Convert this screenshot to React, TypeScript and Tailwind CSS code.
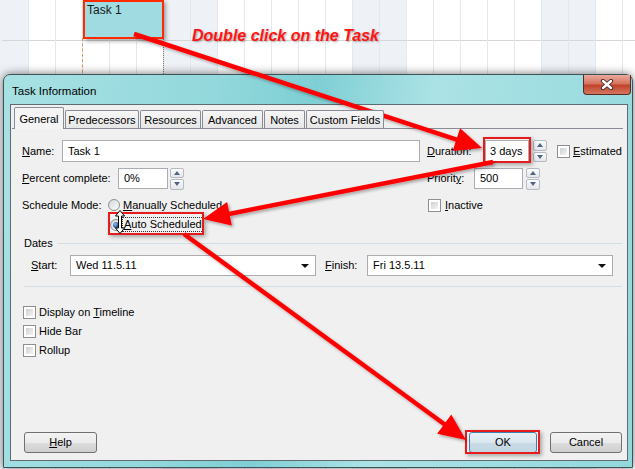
import React from "react";

const cols = Array.from({ length: 24 }, (_, i) => i);

type ArrowProps = { x1: number; y1: number; x2: number; y2: number };

function Arrow({ x1, y1, x2, y2 }: ArrowProps) {
  const dx = x2 - x1;
  const dy = y2 - y1;
  const len = Math.hypot(dx, dy);
  const ux = dx / len;
  const uy = dy / len;
  const L = 27;
  const W = 12;
  const bx = x2 - ux * L;
  const by = y2 - uy * L;
  const nx = -uy;
  const ny = ux;
  const pts = `${x2},${y2} ${bx + nx * W},${by + ny * W} ${bx - nx * W},${by - ny * W}`;
  return (
    <g filter="url(#arrowShadow)">
      <line x1={x1} y1={y1} x2={bx + ux * 2} y2={by + uy * 2} stroke="#ff0000" strokeWidth={4.5} />
      <polygon points={pts} fill="#ff0000" />
    </g>
  );
}

function Spinner() {
  return (
    <div className="flex h-full w-[14px] flex-col gap-[1px]">
      {[0, 1].map((i) => (
        <div
          key={i}
          className="flex flex-1 items-center justify-center rounded-[2px] border border-[#b6bac1] bg-[linear-gradient(#fbfbfb,#e4e6ea)]"
        >
          <svg width="6" height="4" viewBox="0 0 6 4">
            {i === 0 ? (
              <polygon points="0,4 6,4 3,0" fill="#4f6385" />
            ) : (
              <polygon points="0,0 6,0 3,4" fill="#4f6385" />
            )}
          </svg>
        </div>
      ))}
    </div>
  );
}

function Checkbox() {
  return (
    <div className="h-[13px] w-[13px] shrink-0 border border-[#8e8f8f] bg-white p-[2px]">
      <div className="h-full w-full bg-[linear-gradient(135deg,#cdd0d3,#f4f4f4)]" />
    </div>
  );
}

function Radio({ checked }: { checked?: boolean }) {
  return (
    <div className="flex h-[12px] w-[12px] shrink-0 items-center justify-center rounded-full border border-[#8e8f8f] bg-[linear-gradient(135deg,#d6d8db,#fbfbfb)]">
      {checked && (
        <div className="h-[6px] w-[6px] rounded-full bg-[radial-gradient(circle_at_35%_35%,#9cc3ee,#2a5f9e_55%,#0f2c55)]" />
      )}
    </div>
  );
}

function Combo({ value }: { value: string }) {
  return (
    <div className="flex h-[21px] w-[246px] items-center border border-[#abadb3] bg-white pl-[5px] pr-[6px]">
      <span className="flex-1">{value}</span>
      <svg width="8" height="4" viewBox="0 0 8 4">
        <polygon points="0,0 8,0 4,4" fill="#111" />
      </svg>
    </div>
  );
}

function Button({ children, focused }: { children: React.ReactNode; focused?: boolean }) {
  return (
    <div
      className={
        focused
          ? "flex h-[21px] w-[68px] items-center justify-center rounded-[3px] border border-[#3c7fb1] bg-[linear-gradient(#e6f0f6,#dae7ef_50%,#c8dbe6_50%,#c3d7e3)]"
          : "flex h-[21px] items-center justify-center rounded-[3px] border border-[#707070] bg-[linear-gradient(#f3f3f3,#ebebeb_50%,#dddddd_50%,#cfcfcf)]"
      }
    >
      {children}
    </div>
  );
}

const tabs = [
  { label: "Predecessors", w: "w-[74px]" },
  { label: "Resources", w: "w-[61px]" },
  { label: "Advanced", w: "w-[61px]" },
  { label: "Notes", w: "w-[41px]" },
  { label: "Custom Fields", w: "w-[78px]" },
];

export default function App() {
  return (
    <div className="relative h-[469px] w-[635px] overflow-hidden bg-white font-['Liberation_Sans',Arial,sans-serif] text-[11px] text-black">
      {/* gantt grid */}
      <div className="flex h-full">
        <div className="w-[2px] shrink-0 bg-[#eef1f6]" />
        {cols.map((i) => (
          <div
            key={i}
            className={`flex w-[27px] shrink-0 flex-col border-r border-[#e3e8ef] ${
              i % 7 === 6 || i % 7 === 0 ? "bg-[#eef1f6]" : "bg-white"
            }`}
          >
            <div className="h-[41px] border-b border-[#d6d6d6]" />
          </div>
        ))}
      </div>

      {/* task bar */}
      <div className="absolute left-[82px] top-[38px] h-[40px] border-l border-dashed border-[#e8984e]" />
      <div className="absolute left-[163px] top-[38px] h-[40px] border-l border-dotted border-[#777]" />
      <div className="absolute left-[83px] top-0 h-[39px] w-[81px] border-2 border-[#ff2a00] bg-[#9fdbe0] pl-[2px] pt-[1px] text-[12px] leading-[14px] text-[#1a1a1a] shadow-[2px_2px_4px_rgba(0,0,0,0.35)]">
        Task 1
      </div>

      <div className="absolute left-[192px] top-[24px] text-[16px] font-bold italic text-[#ff1414] [text-shadow:1px_1px_2px_rgba(0,0,0,0.35)]">
        Double click on the Task
      </div>

      {/* dialog window */}
      <div className="absolute left-[3px] top-[74px] flex h-[394px] w-[630px] flex-col rounded-t-[7px] border border-[#3e5257] bg-[linear-gradient(100deg,#a8e1e4_0%,#93d8dc_30%,#7ecfd4_45%,#abe2e5_62%,#92d8dc_100%)] pb-[6px] pl-[6px] pr-[4px] shadow-[0_0_10px_rgba(0,0,0,0.55)]">
        <div className="flex h-[29px] shrink-0 items-start">
          <span className="ml-[2px] mt-[8px] text-[11.5px]">Task Information</span>
          <div className="-mr-[3px] ml-auto flex h-[20px] w-[48px] items-center justify-center rounded-b-[4px] border border-t-0 border-[#5a2a22] bg-[linear-gradient(#e9aa9e,#d6735f_45%,#c2432c_55%,#d4765f)]">
            <svg width="14" height="11" viewBox="0 0 14 11">
              <path d="M3 2 L11 9 M11 2 L3 9" stroke="#3b2a2a" strokeWidth="4.2" strokeLinecap="round" />
              <path d="M3 2 L11 9 M11 2 L3 9" stroke="#ffffff" strokeWidth="2.4" strokeLinecap="round" />
            </svg>
          </div>
        </div>

        <div className="flex flex-1 flex-col border border-[#5e6c72] bg-[#f0f0f0]">
          {/* tabs */}
          <div className="relative z-10 ml-[3px] mt-[2px] flex h-[21px] items-end">
            <div className="-mb-px flex h-[22px] w-[50px] justify-center rounded-t-[2px] border border-b-0 border-[#898c95] bg-[#f4f4f4] pt-[3px]">
              General
            </div>
            {tabs.map((t) => (
              <div
                key={t.label}
                className={`ml-[1px] flex h-[18px] ${t.w} justify-center rounded-t-[2px] border border-b-0 border-[#898c95] bg-[linear-gradient(#f6f6f6,#e6e6e6)] pt-[1px]`}
              >
                {t.label}
              </div>
            ))}
          </div>

          {/* tab panel */}
          <div className="ml-[1px] mr-[4px] flex flex-1 flex-col border-t border-[#898c95] pl-[10px]">
            <div className="mt-[11px] flex h-[22px] items-center">
              <span className="w-[40px]">
                <u>N</u>ame:
              </span>
              <div className="flex h-[22px] w-[358px] items-center border border-[#abadb3] bg-white pl-[5px]">Task 1</div>
              <span className="ml-[7px] w-[58px]">
                <u>D</u>uration:
              </span>
              <div className="flex h-[22px] w-[44px] items-center border border-[#abadb3] bg-white pl-[4px]">3 days</div>
              <div className="ml-[4px] h-[22px]">
                <Spinner />
              </div>
              <div className="ml-[10px]">
                <Checkbox />
              </div>
              <span className="ml-[3px]">
                <u>E</u>stimated
              </span>
            </div>

            <div className="mt-[6px] flex h-[21px] items-center">
              <span className="w-[96px]">
                <u>P</u>ercent complete:
              </span>
              <div className="flex h-[21px] w-[50px] items-center border border-[#abadb3] bg-white pl-[5px]">0%</div>
              <div className="ml-[2px] h-[22px]">
                <Spinner />
              </div>
              <span className="ml-[243px] w-[47px]">
                Priorit<u>y</u>:
              </span>
              <div className="flex h-[21px] w-[49px] items-center border border-[#abadb3] bg-white pl-[5px]">500</div>
              <div className="ml-[3px] h-[22px]">
                <Spinner />
              </div>
            </div>

            <div className="mt-[9px] flex h-[14px] items-center">
              <span className="w-[86px]">Schedule Mode:</span>
              <div className="flex w-[320px] items-center">
                <Radio />
                <span className="ml-[3px]">
                  <u>M</u>anually Scheduled
                </span>
              </div>
              <Checkbox />
              <span className="ml-[4px]">
                <u>I</u>nactive
              </span>
            </div>

            <div className="ml-[88px] mt-[5px] flex h-[15px] items-center">
              <Radio checked />
              <span className="border border-dotted border-[#333] px-[1px] leading-[13px]">
                <u>A</u>uto Scheduled
              </span>
            </div>

            <div className="mt-[5px] flex h-[13px] items-center">
              <span className="ml-[2px]">Dates</span>
              <div className="ml-[5px] mr-[1px] h-px flex-1 bg-[#d3dde4]" />
            </div>

            <div className="mt-[5px] flex h-[21px] items-center">
              <span className="ml-[9px] w-[39px]">
                <u>S</u>tart:
              </span>
              <Combo value="Wed 11.5.11" />
              <span className="ml-[9px] w-[42px]">
                <u>F</u>inish:
              </span>
              <Combo value="Fri 13.5.11" />
            </div>

            <div className="ml-[2px] mr-[1px] mt-[10px] h-px bg-[#d3dde4]" />

            <div className="ml-[1px] mt-[19px] flex flex-col gap-[6px]">
              {[
                <>
                  Display on <u>T</u>imeline
                </>,
                <>Hide Bar</>,
                <>Rollup</>,
              ].map((label, i) => (
                <div key={i} className="flex h-[13px] items-center">
                  <Checkbox />
                  <span className="ml-[3px]">{label}</span>
                </div>
              ))}
            </div>
          </div>

          {/* buttons */}
          <div className="mb-[7px] ml-[13px] mr-[5px] mt-[12px] flex h-[21px] items-center">
            <div className="w-[73px]">
              <Button>
                <span>
                  <u>H</u>elp
                </span>
              </Button>
            </div>
            <div className="ml-auto">
              <Button focused>OK</Button>
            </div>
            <div className="ml-[13px] w-[72px]">
              <Button>Cancel</Button>
            </div>
          </div>
        </div>
      </div>

      {/* annotation boxes */}
      <div className="absolute left-[483px] top-[137px] h-[26px] w-[48px] border-2 border-[#e61c1c] shadow-[2px_2px_4px_rgba(0,0,0,0.3)]" />
      <div className="absolute left-[108px] top-[212px] h-[23px] w-[96px] border-2 border-[#e61c1c] shadow-[2px_2px_4px_rgba(0,0,0,0.3)]" />
      <div className="absolute left-[465px] top-[430px] h-[24px] w-[75px] border-2 border-[#e61c1c] shadow-[2px_2px_4px_rgba(0,0,0,0.3)]" />

      {/* mouse cursor */}
      <svg className="absolute left-[115px] top-[210px]" width="10" height="24" viewBox="0 0 10 24">
        <path
          d="M5 0.5 L9.5 6 L6.5 6 L6.5 18 L9.5 18 L5 23.5 L0.5 18 L3.5 18 L3.5 6 L0.5 6 Z"
          fill="#fff"
          stroke="#000"
          strokeWidth="1"
        />
      </svg>

      {/* arrows */}
      <svg className="pointer-events-none absolute left-0 top-0" width="635" height="469">
        <defs>
          <filter id="arrowShadow" x="-10%" y="-10%" width="120%" height="130%">
            <feDropShadow dx="2" dy="2" stdDeviation="1.5" floodColor="#000" floodOpacity="0.3" />
          </filter>
        </defs>
        <Arrow x1={134} y1={34} x2={482} y2={148} />
        <Arrow x1={493} y1={162} x2={203} y2={219} />
        <Arrow x1={184} y1={234} x2={466} y2={440} />
      </svg>
    </div>
  );
}
